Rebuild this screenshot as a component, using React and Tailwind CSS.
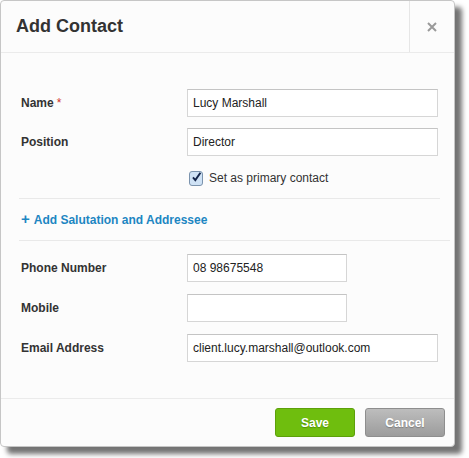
import React from 'react'

const font = { fontFamily: '"Liberation Sans", Arial, sans-serif' }

function Field({ label, required, value, width = 'w-[251px]', className = '' }) {
  return (
    <div className={`flex items-center ${className}`}>
      <div className="w-[168px] pl-[2px] text-[12px] font-bold text-[#333]">
        {label}
        {required && <span className="ml-[3px] font-normal text-[#d0302a]">*</span>}
      </div>
      <div
        className={`${width} h-[28px] border border-[#d6d6d6] border-t-[#c4c4c4] bg-white pl-[5px] flex items-center text-[12px] text-[#222]`}
      >
        {value}
      </div>
    </div>
  )
}

export default function App() {
  return (
    <div className="w-[469px] h-[458px] bg-white" style={font}>
      <div className="w-[455px] h-[447px] flex flex-col rounded-[4px] border border-[#c6c6c6] bg-[#fcfcfc] shadow-[7px_7px_5px_rgba(0,0,0,0.55)]">
        {/* header */}
        <div className="h-[52px] flex border-b border-[#ebebeb]">
          <div className="flex-1 flex items-center pl-[15px] pb-[1px] text-[18px] font-bold text-[#333]">
            Add Contact
          </div>
          <div className="w-[45px] flex items-center justify-center border-l border-[#e6e6e6]">
            <svg width="10" height="10" viewBox="0 0 10 10">
              <path d="M1 1 L9 9 M9 1 L1 9" stroke="#9a9a9a" strokeWidth="2" />
            </svg>
          </div>
        </div>

        {/* body */}
        <div className="flex-1 pl-[18px] pt-[36px]">
          <div className="w-[421px]">
            <Field label="Name" required value="Lucy Marshall" />
            <Field label="Position" value="Director" className="mt-[11px]" />
            <div className="mt-[12px] h-[20px] flex items-center pl-[170px]">
              <div className="w-[14px] h-[15px] rounded-[3px] border border-[#7b93ad] bg-[#cfe2f5] flex items-center justify-center">
                <svg width="14" height="14" viewBox="0 0 14 14" className="-mt-[2px] ml-[1px]">
                  <path d="M2.5 7.5 L5.5 11 L12 1.5" fill="none" stroke="#14254a" strokeWidth="2.4" />
                </svg>
              </div>
              <span className="ml-[6px] text-[12px] text-[#333]">Set as primary contact</span>
            </div>
            <div className="mt-[10px] border-t border-[#e9e9e9]" />
            <div className="h-[41px] flex items-center pl-[2px] text-[12px] font-bold text-[#1d86c2]">
              <span className="text-[15px] leading-none mr-[4px] -mt-[2px]">+</span>
              Add Salutation and Addressee
            </div>
          </div>
          <div className="w-[431px] border-t border-[#e9e9e9]" />
          <div className="w-[421px] pt-[13px]">
            <Field label="Phone Number" value="08 98675548" width="w-[160px]" />
            <Field label="Mobile" value="" width="w-[160px]" className="mt-[12px]" />
            <Field
              label="Email Address"
              value="client.lucy.marshall@outlook.com"
              className="mt-[12px]"
            />
          </div>
        </div>

        {/* footer */}
        <div className="h-[48px] flex items-center justify-end gap-[10px] pr-[9px] border-t border-[#ebebeb]">
          <button className="w-[80px] h-[29px] rounded-[3px] border border-[#5da00a] bg-[#6fbe0e] text-[12px] font-bold text-white [text-shadow:0_1px_1px_rgba(0,0,0,0.25)]">
            Save
          </button>
          <button className="w-[80px] h-[29px] rounded-[3px] border border-[#8e8e8e] bg-gradient-to-b from-[#bdbdbd] to-[#9c9c9c] text-[12px] font-bold text-white [text-shadow:0_1px_1px_rgba(0,0,0,0.25)]">
            Cancel
          </button>
        </div>
      </div>
    </div>
  )
}
